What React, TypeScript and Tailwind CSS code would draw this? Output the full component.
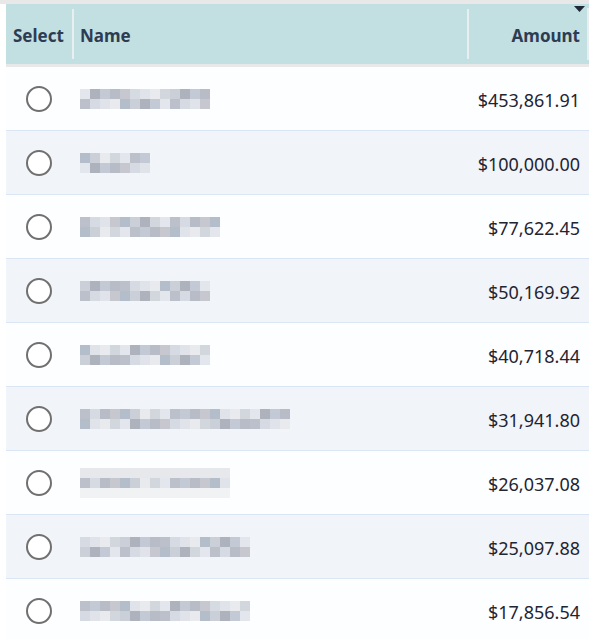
import React from "react";

const rows = [
  { amount: "$453,861.91", blocks: 13, lines: 2 },
  { amount: "$100,000.00", blocks: 7, lines: 2 },
  { amount: "$77,622.45", blocks: 14, lines: 2 },
  { amount: "$50,169.92", blocks: 13, lines: 2 },
  { amount: "$40,718.44", blocks: 13, lines: 2 },
  { amount: "$31,941.80", blocks: 21, lines: 2 },
  { amount: "$26,037.08", blocks: 15, lines: 3 },
  { amount: "$25,097.88", blocks: 17, lines: 2 },
  { amount: "$17,856.54", blocks: 17, lines: 2 },
];

const shades = [
  "#bcc0ca", "#cbd0d8", "#d6dae2", "#aeb2bd", "#e0e3e9", "#c3cad6",
  "#e8eaee", "#b7bcc7", "#d2d6dd", "#c6c7cf", "#e3e6ec", "#b4bdca",
];

// cheap seeded pick so the mosaic stays the same on every render
const pick = (seed: number) => shades[(seed * 7 + (seed >> 2) * 3) % shades.length];

const Mosaic = function ({ blocks, lines, seed }: { blocks: number; lines: number; seed: number }) {
  return (
    <div className="flex flex-col">
      {Array.from({ length: lines }).map((_, l) => (
        <div key={l} className="flex">
          {Array.from({ length: blocks }).map((_, b) => {
            const faint = lines === 3 && l !== 1;
            const c = faint ? (l === 0 ? "#e6e8ec" : "#f1f2f4") : pick(seed * 31 + l * 17 + b * 5);
            return <div key={b} className="h-[10px] w-[10px]" style={{ backgroundColor: c }} />;
          })}
        </div>
      ))}
    </div>
  );
};

const App = function () {
  return (
    <div className="w-[589px] h-[639px] overflow-hidden bg-white" style={{ fontFamily: '"Noto Sans", "Open Sans", sans-serif' }}>
      <div className="h-[4px] bg-[#e8e8e8]" />
      <div className="pl-[6px]">
        <div className="flex h-[60px] bg-[#c2dfe2] text-[#2e3c52] font-bold text-[17px] border-b-[3px] border-[#e8e8e8] box-content">
          <div className="w-[66px] flex items-center pl-[7px] pt-[3px]">Select</div>
          <div className="w-[2px] my-[5px] bg-[#e9eff0]" />
          <div className="w-[393px] flex items-center pl-[6px] pt-[3px]">Name</div>
          <div className="w-[2px] my-[5px] bg-[#e9eff0]" />
          <div className="relative flex-1 flex items-center justify-end pr-[7px] pt-[3px]">
            Amount
            <svg className="absolute top-[2px] right-[2px]" width="11" height="6" viewBox="0 0 11 6">
              <path d="M0 0 L11 0 L5.5 6 Z" fill="#1f2937" />
            </svg>
          </div>
          <div className="w-[2px] my-[4px] bg-[#e9eff0]" />
        </div>
        {rows.map((r, i) => (
          <div
            key={i}
            className={`flex h-[64px] items-center border-b border-[#dbe6f4] ${i % 2 === 0 ? "bg-[#fdfeff]" : "bg-[#f1f4f9]"}`}
          >
            <div className="w-[66px] flex justify-center">
              <div className="w-[26px] h-[26px] rounded-full border-2 border-[#707070] bg-white" />
            </div>
            <div className="w-[397px] pl-[8px]">
              <Mosaic blocks={r.blocks} lines={r.lines} seed={i + 1} />
            </div>
            <div className="flex-1 text-right pr-[9px] pt-[3px] text-[18px] text-[#1f2533]">{r.amount}</div>
          </div>
        ))}
      </div>
    </div>
  );
};

export default App;
